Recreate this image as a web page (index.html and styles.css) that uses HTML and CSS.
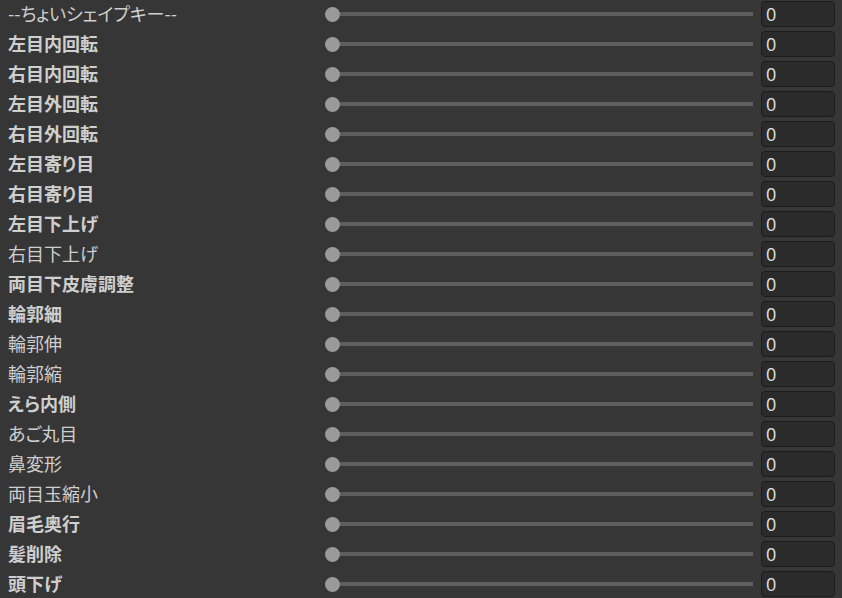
FILE: index.html
```html
<!DOCTYPE html>
<html lang="ja">
<head>
<meta charset="utf-8">
<link rel="stylesheet" href="styles.css">
</head>
<body>
<div class="list">
  <div class="row"><span class="label">--ちょいシェイプキー--</span><div class="slider"><span class="thumb"></span><span class="track"></span></div><div class="num">0</div></div>
  <div class="row"><span class="label bold">左目内回転</span><div class="slider"><span class="thumb"></span><span class="track"></span></div><div class="num">0</div></div>
  <div class="row"><span class="label bold">右目内回転</span><div class="slider"><span class="thumb"></span><span class="track"></span></div><div class="num">0</div></div>
  <div class="row"><span class="label bold">左目外回転</span><div class="slider"><span class="thumb"></span><span class="track"></span></div><div class="num">0</div></div>
  <div class="row"><span class="label bold">右目外回転</span><div class="slider"><span class="thumb"></span><span class="track"></span></div><div class="num">0</div></div>
  <div class="row"><span class="label bold">左目寄り目</span><div class="slider"><span class="thumb"></span><span class="track"></span></div><div class="num">0</div></div>
  <div class="row"><span class="label bold">右目寄り目</span><div class="slider"><span class="thumb"></span><span class="track"></span></div><div class="num">0</div></div>
  <div class="row"><span class="label bold">左目下上げ</span><div class="slider"><span class="thumb"></span><span class="track"></span></div><div class="num">0</div></div>
  <div class="row"><span class="label">右目下上げ</span><div class="slider"><span class="thumb"></span><span class="track"></span></div><div class="num">0</div></div>
  <div class="row"><span class="label bold">両目下皮膚調整</span><div class="slider"><span class="thumb"></span><span class="track"></span></div><div class="num">0</div></div>
  <div class="row"><span class="label bold">輪郭細</span><div class="slider"><span class="thumb"></span><span class="track"></span></div><div class="num">0</div></div>
  <div class="row"><span class="label">輪郭伸</span><div class="slider"><span class="thumb"></span><span class="track"></span></div><div class="num">0</div></div>
  <div class="row"><span class="label">輪郭縮</span><div class="slider"><span class="thumb"></span><span class="track"></span></div><div class="num">0</div></div>
  <div class="row"><span class="label bold">えら内側</span><div class="slider"><span class="thumb"></span><span class="track"></span></div><div class="num">0</div></div>
  <div class="row"><span class="label">あご丸目</span><div class="slider"><span class="thumb"></span><span class="track"></span></div><div class="num">0</div></div>
  <div class="row"><span class="label">鼻変形</span><div class="slider"><span class="thumb"></span><span class="track"></span></div><div class="num">0</div></div>
  <div class="row"><span class="label">両目玉縮小</span><div class="slider"><span class="thumb"></span><span class="track"></span></div><div class="num">0</div></div>
  <div class="row"><span class="label bold">眉毛奥行</span><div class="slider"><span class="thumb"></span><span class="track"></span></div><div class="num">0</div></div>
  <div class="row"><span class="label bold">髪削除</span><div class="slider"><span class="thumb"></span><span class="track"></span></div><div class="num">0</div></div>
  <div class="row"><span class="label bold">頭下げ</span><div class="slider"><span class="thumb"></span><span class="track"></span></div><div class="num">0</div></div>
</div>
</body>
</html>
```
FILE: styles.css
```css
html, body {
  margin: 0;
  padding: 0;
  background: #363636;
  overflow: hidden;
}
.list {
  display: flex;
  flex-direction: column;
  margin-top: -1px;
}
.row {
  display: flex;
  align-items: center;
  height: 30px;
  padding-right: 7px;
}
.label {
  width: 317px;
  padding-left: 8px;
  font-family: "Noto Sans CJK JP", "Noto Sans", sans-serif;
  font-size: 18px;
  line-height: 20px;
  margin-top: -2px;
  color: #cfcfcf;
  white-space: nowrap;
  font-feature-settings: "palt";
}
.label.bold {
  font-weight: 600;
}
.slider {
  display: flex;
  align-items: center;
  width: 428px;
}
.thumb {
  width: 15px;
  height: 15px;
  border-radius: 50%;
  background: #9a9a9a;
  flex: none;
}
.track {
  flex: 1;
  height: 4px;
  background: #5e5e5e;
}
.num {
  margin-left: 8px;
  width: 72px;
  height: 24px;
  border: 1px solid #1c1c1c;
  border-radius: 4px;
  background: #2b2b2b;
  color: #e0e0e0;
  font-family: "Open Sans", sans-serif;
  font-size: 18px;
  line-height: 24px;
  text-indent: 4px;
}
```
